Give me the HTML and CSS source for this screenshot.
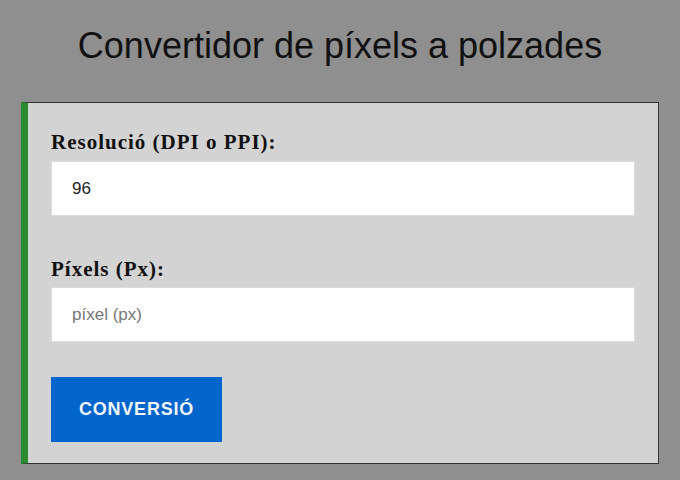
FILE: index.html
```html
<!DOCTYPE html>
<html lang="ca">
<head>
<meta charset="utf-8">
<title>Convertidor de píxels a polzades</title>
<link rel="stylesheet" href="styles.css">
</head>
<body>
<h1 class="title">Convertidor de píxels a polzades</h1>
<form class="card">
  <label class="label" for="dpi">Resolució (DPI o PPI):</label>
  <input class="field" id="dpi" type="text" value="96">
  <label class="label label-second" for="px">Píxels (Px):</label>
  <input class="field" id="px" type="text" placeholder="píxel (px)">
  <button class="btn" type="button">CONVERSIÓ</button>
</form>
</body>
</html>
```
FILE: styles.css
```css
html, body {
  margin: 0;
  padding: 0;
  background: #8f8f8f;
  height: 100%;
}
body {
  font-family: "Liberation Sans", Arial, sans-serif;
}
.title {
  margin: 0;
  padding-top: 25px;
  height: 102px;
  box-sizing: border-box;
  text-align: center;
  font-weight: normal;
  font-size: 36px;
  line-height: 42px;
  color: #111;
}
.card {
  display: flex;
  flex-direction: column;
  align-items: flex-start;
  margin-left: 21px;
  width: 638px;
  box-sizing: border-box;
  background: #d3d3d3;
  border: 1px solid #333;
  border-left: 7px solid #2a8c2f;
  padding: 27px 23px 21px 23px;
}
.label {
  display: block;
  font-family: "Liberation Serif", "Times New Roman", serif;
  font-weight: bold;
  font-size: 21px;
  line-height: 24px;
  letter-spacing: 1px;
  color: #111;
  margin-bottom: 7px;
}
.label-second {
  margin-top: 41px;
  margin-bottom: 6px;
}
.field {
  align-self: stretch;
  height: 55px;
  box-sizing: border-box;
  border: 1px solid #dcdcdc;
  background: #fff;
  padding: 0 20px;
  font-family: "Liberation Sans", Arial, sans-serif;
  font-size: 17px;
  color: #222;
  outline: none;
}
.field::placeholder {
  color: #777;
}
.btn {
  margin-top: 35px;
  height: 65px;
  width: 171px;
  border: none;
  background: #0066cc;
  color: #f2f4f8;
  font-family: "Liberation Sans", Arial, sans-serif;
  font-weight: bold;
  font-size: 18px;
  letter-spacing: 0.8px;
  padding: 0;
}
```
